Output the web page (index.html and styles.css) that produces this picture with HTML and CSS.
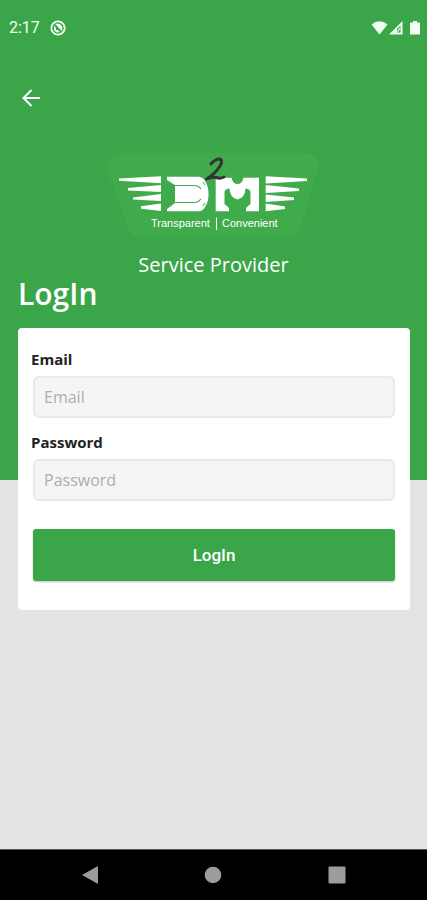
FILE: index.html
```html
<!DOCTYPE html>
<html lang="en">
<head>
<meta charset="utf-8">
<meta name="viewport" content="width=device-width, initial-scale=1">
<title>LogIn</title>
<link rel="stylesheet" href="styles.css">
</head>
<body>
<header class="hero">
  <div class="status">
    <span class="time">2:17</span>
    <svg class="status-badge" width="16" height="16" viewBox="0 0 16 16" aria-hidden="true">
      <circle cx="8" cy="8" r="6.700" fill="none" stroke="currentColor" stroke-width="1.800"/>
      <path d="M5 3.800h4.500l2.700 2.700v5z" fill="currentColor"/>
      <path d="M4 5.500v4.500l2.200 2.200h4L8 10H6V8z" fill="currentColor"/>
    </svg>
    <svg class="status-icons" width="50" height="16" viewBox="0 0 50 16" aria-hidden="true">
      <path d="M.5 4.600Q8.500-2 16.500 4.600L8.500 14.500z" fill="currentColor"/>
      <path d="M31.500 1v13.500H18z" fill="currentColor"/>
      <path d="M26 9l3.500-3.500v7h-3.500z" fill="#3ba549"/>
      <path d="M26.500 12l2.500-4" stroke="currentColor" stroke-width="1.200"/>
      <path d="M39.500 2.500H42V1h4v1.500h2.500q.5 0 .5.500v11q0 .5-.5.500h-9q-.5 0-.5-.500V3q0-.5.500-.5z" fill="currentColor"/>
    </svg>
  </div>
  <button class="back" type="button" aria-label="Back">
    <svg width="20" height="20" viewBox="0 0 20 20" aria-hidden="true">
      <path d="M19 10H3M10.500 2L2.500 10l8 8" fill="none" stroke="currentColor" stroke-width="2"/>
    </svg>
  </button>
  <svg class="logo" width="214" height="86" viewBox="0 0 214 86" role="img" aria-label="D2M">
    <path d="M14 1H198Q215 2 211 18L194 74Q190 85 178 85H36Q24 85 20 74L2 22Q-2 4 14 1z" fill="#40ab4b"/>
    <g fill="#fff">
      <path d="M12 26.500L54 24.300v7L12 28.800zM21 36L54 33v7L21 38.500zM26 45.500L54 42v7L26 47.500zM34 54.300L54 51.500v7.500L34 56.800z"/>
      <path d="M158.700 24.300L200 26.500v2.500L158.700 31.500zM158.700 33L192 36.500V39L158.700 41zM158.700 42.500L187 45.500V48L158.700 50zM158.700 51.500L178 54.500V57L158.700 59.300z"/>
      <path d="M60 24.700H92Q97 25.500 98.500 30Q101.500 34 101.500 42Q101.500 50 98.500 54Q97 58.500 92 59.300H60V57L68 51V33L60 28z"/>
      <path d="M108.700 25.700H124.500Q126 32 130.500 32Q135 32 136.500 25.700H152V59.300H139V56L143.500 52V40Q143.500 37 138.500 36.500Q138 46 130.500 47.500Q123 46 122.500 36.500Q117.500 37 117.500 40V52L122 56V59.300H108.700z"/>
    </g>
    <path d="M68 33.500H88Q92 34 94 37M68 50.500H88Q92 50 94 47" fill="none" stroke="#40ab4b" stroke-width="1.200"/>
    <path d="M96 30l2 3M96 54l2-3" stroke="#40ab4b" stroke-width="1"/>
    <path d="M104 12Q108 7 112.500 7Q116.500 8 113 14Q108 22 99.500 27Q105 24.500 109 25.500Q113 27 117 25" fill="none" stroke="#343434" stroke-width="3" stroke-linecap="round" stroke-linejoin="round"/>
    <path d="M109.500 65.500V78" stroke="#fff" stroke-width="1"/>
    <text class="logo-text" x="44" y="75">Transparent</text>
    <text class="logo-text" x="115" y="75">Convenient</text>
  </svg>
  <p class="role">Service Provider</p>
  <h1 class="title">LogIn</h1>
</header>
<main class="content">
  <form class="card">
    <label class="label" for="email">Email</label>
    <input class="field" id="email" type="email" placeholder="Email">
    <label class="label" for="password">Password</label>
    <input class="field" id="password" type="password" placeholder="Password">
    <button class="submit" type="submit">LogIn</button>
  </form>
</main>
<nav class="system-nav" aria-label="System">
  <button class="nav-button" type="button" aria-label="Back"><svg width="18" height="18" viewBox="0 0 18 18"><path d="M1 9L17 0v18z"/></svg></button>
  <button class="nav-button" type="button" aria-label="Home"><svg width="18" height="18" viewBox="0 0 18 18"><circle cx="9" cy="9" r="8.300"/></svg></button>
  <button class="nav-button" type="button" aria-label="Recent apps"><svg width="18" height="18" viewBox="0 0 18 18"><rect x=".5" y=".5" width="17" height="17" rx="1"/></svg></button>
</nav>
</body>
</html>
```
FILE: styles.css
```css
* {
  box-sizing: border-box;
}

body {
  margin: 0;
  min-height: 100vh;
  display: flex;
  flex-direction: column;
  background: #e4e4e4;
  font-family: "Open Sans", "Noto Sans", sans-serif;
}

button {
  border: 0;
  padding: 0;
  background: none;
  color: inherit;
}

svg {
  display: block;
}

.hero {
  display: flex;
  flex-direction: column;
  padding-bottom: 169px;
  background: #3ba549;
  color: #fff;
}

.status {
  display: flex;
  align-items: center;
  height: 56px;
  padding: 0 6px 0 9px;
  color: #f4fff4;
}

.time {
  font: 16px/20px Roboto, sans-serif;
}

.status-badge {
  margin-left: 10px;
}

.status-icons {
  margin-left: auto;
}

.back {
  align-self: flex-start;
  margin: 32px 0 0 21px;
}

.logo {
  align-self: center;
  margin-top: 44px;
}

.logo-text {
  font: 11px "Liberation Sans", sans-serif;
  fill: #fff;
}

.role {
  margin: 14px 0 0;
  font-size: 20px;
  line-height: 25px;
  text-align: center;
}

.title {
  margin: 0 18px;
  font-size: 30px;
  font-weight: 600;
  line-height: 34px;
}

.content {
  flex: 1;
  margin-top: -152px;
  padding: 0 17px 24px 18px;
}

.card {
  display: flex;
  flex-direction: column;
  padding: 19px 15px 29px;
  border-radius: 4px;
  background: #fff;
}

.label {
  margin-left: -2px;
  color: #222;
  font-size: 15px;
  font-weight: 700;
  line-height: 24px;
}

.field {
  width: 100%;
  height: 42px;
  margin: 5px 0 12px;
  padding: 0 9px;
  border: 2px solid #e9e9e9;
  border-radius: 6px;
  background: #f5f5f5;
  color: #222;
  font: 16px "Open Sans", "Noto Sans", sans-serif;
}

.field::placeholder {
  color: #adadad;
  opacity: 1;
}

.submit {
  height: 52px;
  margin-top: 16px;
  border-radius: 3px;
  background: #3ba549;
  box-shadow: 0 1px 2px #00000040;
  color: #fff;
  font: 500 17px Roboto, sans-serif;
}

.system-nav {
  display: flex;
  justify-content: space-around;
  height: 51px;
  padding: 0 28px;
  border-top: 1px solid #555;
  background: #000;
}

.nav-button {
  display: grid;
  place-items: center;
  width: 48px;
  fill: #9c9c9c;
}
```
